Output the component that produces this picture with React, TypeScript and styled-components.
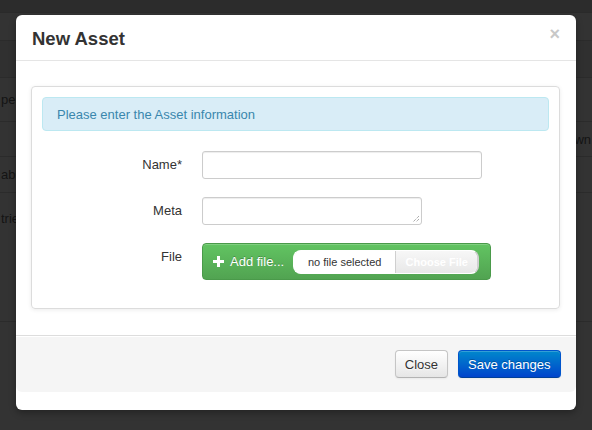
import React from "react";
import styled, { createGlobalStyle } from "styled-components";

const Global = createGlobalStyle`
  html, body { margin: 0; padding: 0; }
  body {
    width: 592px; height: 430px; overflow: hidden;
    background: #333;
    font-family: "Liberation Sans", Arial, sans-serif;
    font-size: 13px; color: #333;
  }
`;

const Page = styled.div`
  position: relative;
  width: 592px;
  height: 430px;
  background: #333;
  overflow: hidden;
`;

const NavBar = styled.div`
  height: 12px;
  background: #2c2c2c;
  border-bottom: 1px solid #2a2a2a;
`;

const BgTable = styled.div`
  display: flex;
  flex-direction: column;
`;

const BgRow = styled.div<{ $h: number; $shade?: boolean }>`
  height: ${(p) => p.$h}px;
  border-bottom: 1px solid #2b2b2b;
  background: ${(p) => (p.$shade ? "#303030" : "#333")};
  display: flex;
  align-items: center;
  justify-content: space-between;
  font-size: 13px;
  color: #141414;
`;

const BgCell = styled.span<{ $top?: number }>`
  white-space: nowrap;
  margin: 0 1px;
  align-self: ${(p) => (p.$top !== undefined ? "flex-start" : "center")};
  margin-top: ${(p) => p.$top ?? 0}px;
`;

const Modal = styled.div`
  position: absolute;
  left: 16px;
  top: 15px;
  width: 560px;
  height: 395px;
  background: #fff;
  border-radius: 6px;
  box-shadow: 0 3px 7px rgba(0, 0, 0, 0.3);
  display: flex;
  flex-direction: column;
`;

const Header = styled.div`
  border-bottom: 1px solid #e5e5e5;
  display: flex;
  align-items: center;
  justify-content: space-between;
  padding: 0 16px 0 16px;
  box-sizing: border-box;
  height: 46px;
`;

const Title = styled.h3`
  margin: 0;
  font-size: 18.5px;
  font-weight: bold;
  color: #333;
  padding-top: 2px;
`;

const CloseX = styled.span`
  font-size: 18px;
  font-weight: bold;
  color: #c8c8c8;
  line-height: 1;
  margin-top: -7px;
`;

const Body = styled.div`
  flex: none;
  height: 274px;
  padding: 25px 16px 0 15px;
  box-sizing: border-box;
`;

const Well = styled.div`
  border: 1px solid #dcdcdc;
  border-radius: 4px;
  box-shadow: 0 1px 4px rgba(0, 0, 0, 0.08);
  padding: 10px 10px 28px 10px;
  display: flex;
  flex-direction: column;
  gap: 18px;
`;

const Alert = styled.div`
  background: #d9edf7;
  border: 1px solid #bce8f1;
  border-radius: 4px;
  color: #3a87ad;
  font-size: 13px;
  height: 34px;
  box-sizing: border-box;
  display: flex;
  align-items: center;
  padding-left: 14px;
  margin-bottom: 2px;
`;

const Row = styled.div`
  display: flex;
  align-items: flex-start;
  gap: 20px;
`;

const Label = styled.label`
  width: 140px;
  text-align: right;
  font-size: 13px;
  color: #333;
  line-height: 20px;
  padding-top: 4px;
`;

const TextInput = styled.div<{ $w: number }>`
  width: ${(p) => p.$w}px;
  height: 28px;
  box-sizing: border-box;
  border: 1px solid #ccc;
  border-radius: 3px;
  background: #fff;
  box-shadow: inset 0 1px 1px rgba(0, 0, 0, 0.075);
  position: relative;
`;

const Grip = styled.svg`
  position: absolute;
  right: 1px;
  bottom: 1px;
`;

const UploadBtn = styled.div`
  width: 289px;
  height: 37px;
  box-sizing: border-box;
  border: 1px solid #4a9a4a;
  border-radius: 4px;
  background: linear-gradient(#62c462, #51a351);
  box-shadow: inset 0 1px 0 rgba(255, 255, 255, 0.2);
  display: flex;
  align-items: center;
  padding-left: 10px;
  color: #fff;
  font-size: 13px;
  text-shadow: 0 -1px 0 rgba(0, 0, 0, 0.25);
`;

const PlusIcon = styled.svg`
  margin-right: 6px;
  flex: none;
`;

const FilePill = styled.div`
  margin-left: 9px;
  width: 186px;
  height: 24px;
  box-sizing: border-box;
  background: #fff;
  border-radius: 8px;
  border: 1px solid #fff;
  border-right: 2px solid #d0d0d0;
  display: flex;
  overflow: hidden;
  text-shadow: none;
`;

const NoFile = styled.span`
  width: 101px;
  border-right: 1px solid #cfcfcf;
  display: flex;
  align-items: center;
  justify-content: center;
  font-size: 11px;
  color: #333;
`;

const ChooseBtn = styled.span`
  flex: 1;
  background: linear-gradient(#f7f7f7, #e8e8e8);
  display: flex;
  align-items: center;
  justify-content: center;
  font-size: 11px;
  font-weight: bold;
  color: #fff;
  border-radius: 0 7px 7px 0;
`;

const Footer = styled.div`
  height: 57px;
  box-sizing: border-box;
  border-top: 1px solid #ddd;
  background: #f5f5f5;
  border-radius: 0 0 6px 6px;
  box-shadow: inset 0 1px 0 #fff;
  display: flex;
  justify-content: flex-end;
  align-items: flex-start;
  padding: 14px 15px 0 0;
  gap: 10px;
`;

const Btn = styled.button<{ $primary?: boolean }>`
  height: 28px;
  padding: 0 ${(p) => (p.$primary ? "9.5px" : "8.5px")};
  font-family: "Liberation Sans", Arial, sans-serif;
  font-size: 13px;
  border-radius: 4px;
  cursor: pointer;
  border: 1px solid ${(p) => (p.$primary ? "#0055cc" : "#c5c5c5")};
  border-bottom-color: ${(p) => (p.$primary ? "#003f99" : "#b3b3b3")};
  color: ${(p) => (p.$primary ? "#fff" : "#333")};
  background: ${(p) =>
    p.$primary
      ? "linear-gradient(#0088cc, #0044cc)"
      : "linear-gradient(#ffffff, #e6e6e6)"};
  text-shadow: ${(p) =>
    p.$primary ? "0 -1px 0 rgba(0,0,0,0.25)" : "0 1px 1px rgba(255,255,255,0.75)"};
  box-shadow: inset 0 1px 0 rgba(255, 255, 255, 0.2), 0 1px 2px rgba(0, 0, 0, 0.05);
`;

export default function App() {
  return (
    <>
      <Global />
      <Page>
        <NavBar />
        <BgTable>
          <BgRow $h={27} />
          <BgRow $h={36} $shade />
          <BgRow $h={43}>
            <BgCell>per</BgCell>
          </BgRow>
          <BgRow $h={34}>
            <span />
            <BgCell>wn</BgCell>
          </BgRow>
          <BgRow $h={35}>
            <BgCell>abl</BgCell>
          </BgRow>
          <BgRow $h={128}>
            <BgCell $top={18}>trie</BgCell>
          </BgRow>
        </BgTable>

        <Modal>
          <Header>
            <Title>New Asset</Title>
            <CloseX>×</CloseX>
          </Header>
          <Body>
            <Well>
              <Alert>Please enter the Asset information</Alert>
              <Row>
                <Label>Name*</Label>
                <TextInput $w={280} />
              </Row>
              <Row>
                <Label>Meta</Label>
                <TextInput $w={220}>
                  <Grip width="9" height="9" viewBox="0 0 9 9">
                    <path d="M8 2 L2 8 M8 5 L5 8" stroke="#888" strokeWidth="1" strokeDasharray="1 1" />
                  </Grip>
                </TextInput>
              </Row>
              <Row>
                <Label>File</Label>
                <UploadBtn>
                  <PlusIcon width="11" height="11" viewBox="0 0 11 11">
                    <path d="M4 0h3v4h4v3H7v4H4V7H0V4h4z" fill="#fff" />
                  </PlusIcon>
                  Add file...
                  <FilePill>
                    <NoFile>no file selected</NoFile>
                    <ChooseBtn>Choose File</ChooseBtn>
                  </FilePill>
                </UploadBtn>
              </Row>
            </Well>
          </Body>
          <Footer>
            <Btn>Close</Btn>
            <Btn $primary>Save changes</Btn>
          </Footer>
        </Modal>
      </Page>
    </>
  );
}
